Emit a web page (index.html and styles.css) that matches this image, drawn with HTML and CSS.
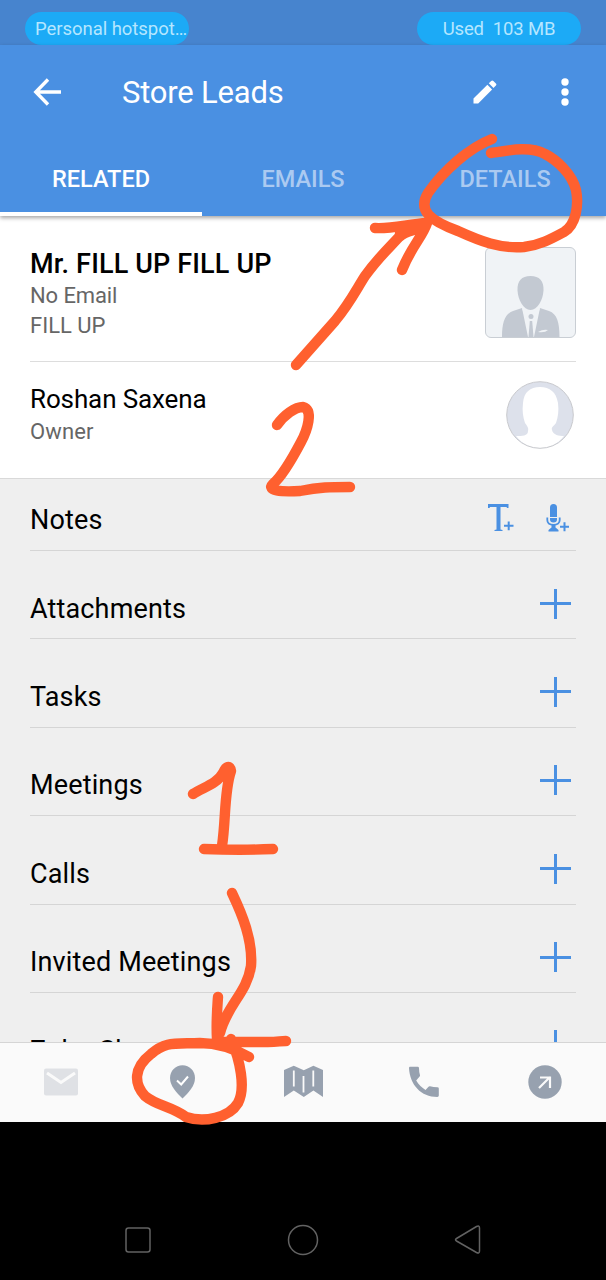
FILE: index.html
```html
<!DOCTYPE html>
<html lang="en">
<head>
<meta charset="utf-8">
<title>Store Leads</title>
<link rel="stylesheet" href="styles.css">
</head>
<body>
<div class="screen">
  <div class="status">
    <span class="pill pill-left">Personal hotspot…</span>
    <span class="pill pill-right">Used&nbsp; 103 MB</span>
  </div>
  <header class="header">
    <div class="toolbar">
      <svg class="back" width="28" height="28" viewBox="0 0 28 28" fill="none" stroke="#fff" stroke-width="3.4"><path d="M28 14H3M15 1.500L2.800 14l12.200 12.500"/></svg>
      <h1 class="title">Store Leads</h1>
      <svg class="edit" width="24" height="24" viewBox="0 0 24 24" fill="#fff"><path d="M0.500 18.600L14.400 4.700l4.700 4.700L5.200 23.400H0.500z"/><path d="M15.800 3.300L18.200 0.900q1.100-1 2.200 0l2.500 2.500q1 1.100 0 2.200L20.500 8z"/></svg>
      <svg class="more" width="8" height="28" viewBox="0 0 8 28" fill="#fff"><circle cx="4" cy="4" r="3.700"/><circle cx="4" cy="14" r="3.700"/><circle cx="4" cy="24" r="3.700"/></svg>
    </div>
    <nav class="tabs">
      <a class="tab active">RELATED</a>
      <a class="tab">EMAILS</a>
      <a class="tab">DETAILS</a>
    </nav>
  </header>
  <main class="content">
    <section class="lead">
      <div class="info">
        <h2 class="name">Mr. FILL UP FILL UP</h2>
        <p class="sub email">No Email</p>
        <p class="sub company">FILL UP</p>
      </div>
      <svg class="photo" width="91" height="91" viewBox="0 0 91 91"><rect x=".5" y=".5" width="90" height="90" rx="5.500" fill="#f0f3f6" stroke="#c9ced4"/><path d="M17 90c0-15 3-23 11-26l9-3 9 28 9-28 9 3c8 3 10.500 11 10.500 26z" fill="#c3c9d2"/><path d="M37 61l6 29h6l6-29-9 6z" fill="#f0f3f6"/><path d="M45.500 29c9 0 13.500 5 13 14.500-.5 9.500-6 19.500-13 19.500s-12.500-10-13-19.500c-.5-9.500 4-14.500 13-14.500z" fill="#c3c9d2"/><circle cx="46" cy="69.500" r="2.500" fill="#c3c9d2"/><path d="M44.800 74h2.400l1.300 16h-5z" fill="#c3c9d2"/><path d="M53 85q5-3 10-2-3 3-10 2z" fill="#f0f3f6"/></svg>
    </section>
    <section class="owner">
      <div class="info">
        <h2 class="owner-name">Roshan Saxena</h2>
        <p class="sub role">Owner</p>
      </div>
      <svg class="avatar" width="68" height="68" viewBox="0 0 68 68"><circle cx="34" cy="34" r="33.300" fill="#dde1eb"/><path d="M10 55c6 0 12 0 12-5 1-3-1-5-3-8-2-6-3-12-2-20C18 11 24 6 34 6s16 5 18 16c1 8 0 14-2 20-2 3-5 4-4 7 1 5 7 6 12 6-6 8-14 12-24 12S16 63 10 55z" fill="#fff"/><circle cx="34" cy="34" r="33.300" fill="none" stroke="#c8c9cd"/></svg>
    </section>
    <section class="lists">
      <div class="row notes"><span class="label">Notes</span>
        <span class="actions">
          <svg width="27" height="28" viewBox="0 0 27 28" fill="#4a90e2"><path d="M1 0h20.500v4h-1.500l-.5-1H13.500v22.500l2 .5v1h-8v-1l2-.5V3H3L2.500 4H1z"/><path d="M20.700 17.500h2v3.300h3.800v2h-3.800v3.400h-2v-3.400h-3.700v-2h3.700z"/></svg>
          <svg width="24" height="29" viewBox="0 0 24 29" fill="#4a90e2"><path d="M4 3.500Q4 0 7.500 0t3.500 3.500V13h-7zM4 14h7v1.500Q11 18.500 7.500 18.500t-3.500-3z"/><path d="M1.300 13.500v2.500q0 4.800 6.200 4.800t6.200-4.800v-2.500" fill="none" stroke="#4a90e2" stroke-width="1.800"/><path d="M5.500 21h4v2.500l3 2.500v1.500H2.500V26l3-2.500zM17.500 18.300h2v3.500h3.500v2h-3.500v3.500h-2v-3.500H14v-2h3.500z"/></svg>
        </span>
      </div>
      <div class="row"><span class="label">Attachments</span><i class="plus"></i></div>
      <div class="row"><span class="label">Tasks</span><i class="plus"></i></div>
      <div class="row"><span class="label">Meetings</span><i class="plus"></i></div>
      <div class="row"><span class="label">Calls</span><i class="plus"></i></div>
      <div class="row"><span class="label">Invited Meetings</span><i class="plus"></i></div>
      <div class="row last"><span class="label">Zoho Show</span><i class="plus"></i></div>
    </section>
  </main>
  <footer class="bottom">
    <svg width="34" height="34" viewBox="0 0 34 34"><rect y="3.500" width="34" height="27" rx="2" fill="#dfe1e5"/><path d="M3 8l14 9.500L31 8" fill="none" stroke="#fafafa" stroke-width="3"/></svg>
    <svg width="34" height="34" viewBox="0 0 34 34"><path d="M18.500.3C25.500.3 31 6 31 13c0 8-6.500 14.500-12.500 20.500C12.500 27.500 6 21 6 13 6 6 11.500.3 18.500.3z" fill="#97a1af"/><path d="M13 15.500l4.200 4 6.800-8" fill="none" stroke="#fff" stroke-width="2"/></svg>
    <svg class="map" width="40" height="34" viewBox="0 0 40 34" fill="#97a1af"><path d="M1 5L10.800.8l10 4.400 9.600-4.400L40 5V32l-9.600-6.500L20.800 32l-10-6.500L1 32z"/><path d="M10.800 5.500v16M20.500 11v16.500M30.300 5.500v16" stroke="#fafafa" stroke-width="1.800"/></svg>
    <svg width="34" height="34" viewBox="0 0 34 34"><path d="M1.300 1.800h7.400q1.300 0 1.300 1.400 0 3.700 1 7 .2.800-.4 1.400l-3.400 4c2.600 4.500 5.600 7 9.300 9.300l3-3.200q.6-.6 1.500-.4 3.500 1 7.400 1 1.400 0 1.400 1.300v7q0 1.400-1.500 1.400C12 32 1 20 0 3.300 0 2 .5 1.800 1.300 1.800z" fill="#97a1af"/></svg>
    <svg width="34" height="34" viewBox="0 0 34 34"><circle cx="17" cy="17" r="16.700" fill="#97a1af"/><path d="M11 23L22 12M12 12.500H22V23" fill="none" stroke="#fafafa" stroke-width="2.200"/></svg>
  </footer>
  <div class="navbar">
    <svg width="28" height="32" viewBox="0 0 28 32"><rect x="2" y="4" width="24" height="24" rx="2.500"/></svg>
    <svg width="32" height="32" viewBox="0 0 32 32"><circle cx="16" cy="16" r="14.500"/></svg>
    <svg width="28" height="32" viewBox="0 0 28 32"><path d="M2.500 14.500L22.500 2.500Q25.500 1 25.500 4v23q0 3-3 1.500L2.500 17q-2-1.200 0-2.500z"/></svg>
  </div>
  <svg class="ink" width="606" height="1280" viewBox="0 0 606 1280">
    <path d="M492 139C469 148 444 170 428 193C417 211 431 221 458 231C480 241 500 249 524 247C540 245 551 239 564 232C576 225 579 205 576 190C572 174 557 160 545 154C530 146 510 150 491 153"/>
    <path d="M296 365L335 321C350 303 356 290 365 276C378 258 387 250 399 237C408 229 414 232 423 226M375 228C393 229 408 224 427 223C423 236 411 247 402 270M400 234L417 228"/>
    <path d="M277 425C284 415 295 407 303 407C314 410 307 431 301 442C291 461 281 477 273 484C266 491 281 492 300 491C320 487 330 487 350 487"/>
    <path d="M193 794C204 787 217 784 223 773C226 766 230 765 231 771C224 791 226 820 222 846M204 849C230 850 250 850 273 849"/>
    <path d="M232 893C242 914 253 940 251 966C247 993 227 1005 220 1033M218 997C217 1011 216 1023 217 1039M222 1042H268C278 1042 280 1041 286 1041M249 1057C233 1048 218 1043 200 1043C175 1044 166 1041 151 1054C133 1068 134 1084 145 1096C157 1106 171 1106 186 1117C204 1123 229 1118 238 1103C246 1088 240 1060 231 1039"/>
  </svg>
</div>
</body>
</html>
```

FILE: styles.css
```css
* { box-sizing: border-box; }
body { margin: 0; background: #000; font-family: Roboto, sans-serif; }
h1, h2, p { margin: 0; font-weight: 400; }
svg { display: block; flex: none; }
span, h1, h2, p { white-space: nowrap; }

.screen { position: relative; width: 606px; height: 1280px; display: flex; flex-direction: column; overflow: hidden; background: #fff; }

.status { height: 45px; flex: none; background: #4784ce; display: flex; justify-content: space-between; padding: 12px 25px 0 25px; }
.pill { width: 164px; height: 33px; border-radius: 17px; background: #1caaf6; color: #b5e6ff; font-size: 18.500px; line-height: 34px; }
.pill-left { padding-left: 10px; letter-spacing: -.05px; }
.pill-right { text-align: center; letter-spacing: -.15px; }

.header { flex: none; height: 171px; background: #4a90e2; display: flex; flex-direction: column; position: relative; z-index: 1; box-shadow: 0 2px 4px rgba(0,0,0,.35); }
.toolbar { flex: none; height: 94px; display: flex; align-items: center; padding: 0 37px 0 33px; }
.title { margin-left: 61px; flex: 1; color: #fff; font-size: 31px; letter-spacing: -.2px; line-height: 40px; padding-top: 2px; }
.edit { margin-right: 64px; }
.tabs { flex: none; height: 77px; display: flex; }
.tab { width: 202px; padding-top: 10px; text-align: center; font-size: 23.500px; font-weight: 500; line-height: 60px; color: #abcaf1; }
.tab.active { color: #fff; border-bottom: 4px solid #fff; }

.content { height: 826px; flex: none; overflow: hidden; }
.lead { height: 146px; margin: 0 30px; border-bottom: 1px solid #ddd; display: flex; justify-content: space-between; padding-top: 31px; }
.name { font-size: 27px; letter-spacing: .15px; line-height: 32px; padding-top: 1px; font-weight: 500; color: #000; }
.sub { font-size: 22px; line-height: 30px; color: #666; }
.email { padding-top: 1px; letter-spacing: -.1px; }
.owner { height: 116px; padding: 19px 32px 0 30px; display: flex; justify-content: space-between; }
.owner .info { padding-top: 2px; }
.owner-name { font-size: 26px; letter-spacing: -.12px; line-height: 32px; color: #000; }
.role { padding-top: 2px; letter-spacing: .15px; }

.lists { background: #efefef; border-top: 1px solid #d9d9d9; padding: 0 30px; }
.row { height: 88.400px; border-bottom: 1px solid #d5d5d5; display: flex; justify-content: space-between; align-items: flex-start; padding: 38.500px 5px 0 0; }
.notes { height: 72px; padding: 22px 6px 0 0; }
.last .label { padding-top: 1px; }
.label { font-size: 27px; letter-spacing: .15px; line-height: 38px; color: #000; }
.actions { display: flex; gap: 32px; padding-top: 3px; }
.plus { width: 31px; height: 30px; margin-top: -1px; background: linear-gradient(#4a90e2,#4a90e2) center/31px 3px no-repeat, linear-gradient(#4a90e2,#4a90e2) center/3px 30px no-repeat; }

.bottom { flex: none; height: 80px; background: #fafafa; border-top: 1px solid #d5d5d5; display: flex; align-items: center; justify-content: space-between; padding: 0 44px 1px; }
.navbar { flex: 1; background: #000; display: flex; align-items: flex-start; justify-content: space-between; padding: 102px 124px 0; }
.navbar svg { fill: none; stroke: #626262; stroke-width: 1.500; }
.ink { position: absolute; left: 0; top: 0; z-index: 5; fill: none; stroke: #ff602f; stroke-width: 10.400; stroke-linecap: round; stroke-linejoin: round; }
```
